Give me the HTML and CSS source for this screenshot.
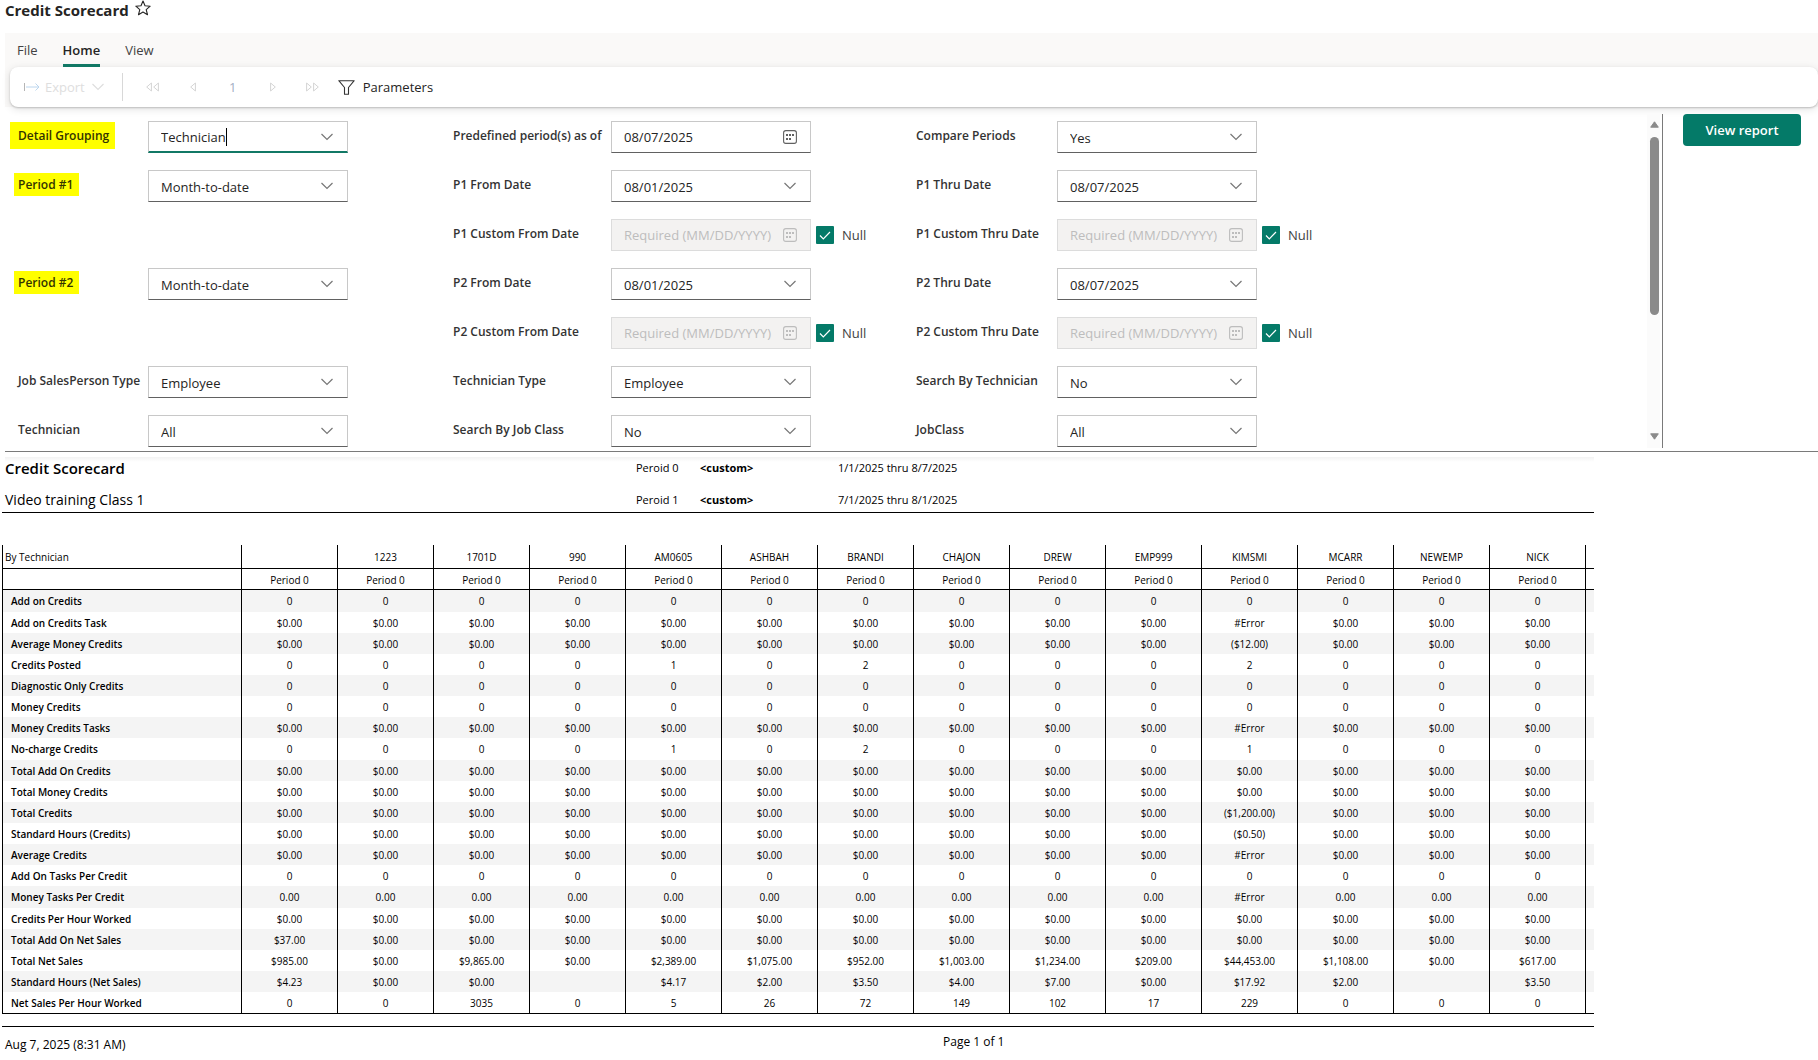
FILE: index.html
```html
<!DOCTYPE html>
<html lang="en">
<head>
    <meta charset="UTF-8">
    <meta name="viewport" content="width=device-width, initial-scale=1.0">
    <link rel="stylesheet" href="styles.css">
    <title>Credit Scorecard</title>
</head>
<body>
    <svg class="sprite" aria-hidden="true">
        <symbol id="chevron" viewBox="0 0 12 8"><path d="M.5 1 6 6.500 11.500 1" fill="none" stroke="currentColor" stroke-width="1.200"/></symbol>
        <symbol id="calendar" viewBox="0 0 14 14">
            <rect x=".6" y=".6" width="12.800" height="12.800" rx="2.200" fill="none" stroke="currentColor" stroke-width="1.100"/>
            <path d="M3 4h2v2H3zM6 4h2v2H6zM9 4h2v2H9zM3 8h2v2H3zM6 8h2v2H6z" fill="currentColor"/>
        </symbol>
        <symbol id="prev" viewBox="0 0 6 10"><path d="M5.400 1v8L.7 5z" fill="none" stroke="currentColor"/></symbol>
        <symbol id="next" viewBox="0 0 6 10"><path d="M.6 1v8l4.700-4z" fill="none" stroke="currentColor"/></symbol>
    </svg>

    <header class="titulo">
        <h1>Credit Scorecard</h1>
        <button class="star" aria-label="Favorite">
            <svg width="16" height="16" viewBox="0 0 16 16"><path d="M8 1l2 4.800 5.200.4-4 3.400 1.300 5.100L8 12l-4.500 2.700 1.300-5.100-4-3.400L6 5.800z" fill="none" stroke="#252423" stroke-width="1.100" stroke-linejoin="round"/></svg>
        </button>
    </header>

    <div class="ribbon">
        <nav class="tabs">
            <button>File</button>
            <button class="active">Home</button>
            <button>View</button>
        </nav>
        <div class="toolbar">
            <button class="export" disabled>
                <svg width="16" height="10" viewBox="0 0 16 10"><path d="M.5 1v8" stroke="#b5b5b5"/><path d="M2 5h13M11.500 1.500 15 5l-3.500 3.500" fill="none" stroke="#bcd6ee"/></svg>
                Export
                <svg class="chevron" width="12" height="8"><use href="#chevron"/></svg>
            </button>
            <div class="separator"></div>
            <button class="page" disabled aria-label="First page"><svg width="6" height="10"><use href="#prev"/></svg><svg width="6" height="10"><use href="#prev"/></svg></button>
            <button class="page" disabled aria-label="Previous page"><svg width="6" height="10"><use href="#prev"/></svg></button>
            <span class="page number">1</span>
            <button class="page" disabled aria-label="Next page"><svg width="6" height="10"><use href="#next"/></svg></button>
            <button class="page" disabled aria-label="Last page"><svg width="6" height="10"><use href="#next"/></svg><svg width="6" height="10"><use href="#next"/></svg></button>
            <button class="parameters">
                <svg width="17" height="15" viewBox="0 0 17 15"><path d="M.8.7h15.400L10.500 7.500v6.700h-4V7.500z" fill="none" stroke="#333" stroke-width="1.100" stroke-linejoin="round"/></svg>
                Parameters
            </button>
        </div>
    </div>

    <section class="panel">
        <form class="params">
            <label for="grouping"><mark class="big">Detail Grouping</mark></label>
            <div class="field focus">
                <input id="grouping" class="combo" type="text" value="Technician"><span class="caret"></span>
                <svg class="chevron" width="12" height="8"><use href="#chevron"/></svg>
            </div>
            <label for="asof">Predefined period(s) as of</label>
            <div class="field"><input id="asof" type="text" value="08/07/2025"><svg width="14" height="14"><use href="#calendar"/></svg></div>
            <label for="compare">Compare Periods</label>
            <div class="field"><select id="compare"><option>Yes</option></select><svg class="chevron" width="12" height="8"><use href="#chevron"/></svg></div>

            <label for="period1"><mark>Period #1</mark></label>
            <div class="field"><select id="period1"><option>Month-to-date</option></select><svg class="chevron" width="12" height="8"><use href="#chevron"/></svg></div>
            <label for="p1from">P1 From Date</label>
            <div class="field"><select id="p1from"><option>08/01/2025</option></select><svg class="chevron" width="12" height="8"><use href="#chevron"/></svg></div>
            <label for="p1thru">P1 Thru Date</label>
            <div class="field"><select id="p1thru"><option>08/07/2025</option></select><svg class="chevron" width="12" height="8"><use href="#chevron"/></svg></div>

            <label class="second" for="p1cfrom">P1 Custom From Date</label>
            <div class="custom">
                <div class="field off"><input id="p1cfrom" type="text" placeholder="Required (MM/DD/YYYY)" disabled><svg width="14" height="14"><use href="#calendar"/></svg></div>
                <label class="null"><input type="checkbox" checked>Null</label>
            </div>
            <label for="p1cthru">P1 Custom Thru Date</label>
            <div class="custom">
                <div class="field off"><input id="p1cthru" type="text" placeholder="Required (MM/DD/YYYY)" disabled><svg width="14" height="14"><use href="#calendar"/></svg></div>
                <label class="null"><input type="checkbox" checked>Null</label>
            </div>

            <label for="period2"><mark>Period #2</mark></label>
            <div class="field"><select id="period2"><option>Month-to-date</option></select><svg class="chevron" width="12" height="8"><use href="#chevron"/></svg></div>
            <label for="p2from">P2 From Date</label>
            <div class="field"><select id="p2from"><option>08/01/2025</option></select><svg class="chevron" width="12" height="8"><use href="#chevron"/></svg></div>
            <label for="p2thru">P2 Thru Date</label>
            <div class="field"><select id="p2thru"><option>08/07/2025</option></select><svg class="chevron" width="12" height="8"><use href="#chevron"/></svg></div>

            <label class="second" for="p2cfrom">P2 Custom From Date</label>
            <div class="custom">
                <div class="field off"><input id="p2cfrom" type="text" placeholder="Required (MM/DD/YYYY)" disabled><svg width="14" height="14"><use href="#calendar"/></svg></div>
                <label class="null"><input type="checkbox" checked>Null</label>
            </div>
            <label for="p2cthru">P2 Custom Thru Date</label>
            <div class="custom">
                <div class="field off"><input id="p2cthru" type="text" placeholder="Required (MM/DD/YYYY)" disabled><svg width="14" height="14"><use href="#calendar"/></svg></div>
                <label class="null"><input type="checkbox" checked>Null</label>
            </div>

            <label for="jobtype">Job SalesPerson Type</label>
            <div class="field"><select id="jobtype"><option>Employee</option></select><svg class="chevron" width="12" height="8"><use href="#chevron"/></svg></div>
            <label for="techtype">Technician Type</label>
            <div class="field"><select id="techtype"><option>Employee</option></select><svg class="chevron" width="12" height="8"><use href="#chevron"/></svg></div>
            <label for="bytech">Search By Technician</label>
            <div class="field"><select id="bytech"><option>No</option></select><svg class="chevron" width="12" height="8"><use href="#chevron"/></svg></div>

            <label for="tech">Technician</label>
            <div class="field"><select id="tech"><option>All</option></select><svg class="chevron" width="12" height="8"><use href="#chevron"/></svg></div>
            <label for="byjob">Search By Job Class</label>
            <div class="field"><select id="byjob"><option>No</option></select><svg class="chevron" width="12" height="8"><use href="#chevron"/></svg></div>
            <label for="jobclass">JobClass</label>
            <div class="field"><select id="jobclass"><option>All</option></select><svg class="chevron" width="12" height="8"><use href="#chevron"/></svg></div>
        </form>
        <div class="scrollbar">
            <svg width="9" height="7" viewBox="0 0 9 7"><path d="M4.500.8 8.300 6.200H.7z" fill="#8a8a8a" stroke="#8a8a8a" stroke-linejoin="round"/></svg>
            <div class="track"><div class="thumb"></div></div>
            <svg width="9" height="7" viewBox="0 0 9 7"><path d="M4.500 6.200.7.800h7.600z" fill="#8a8a8a" stroke="#8a8a8a" stroke-linejoin="round"/></svg>
        </div>
        <div class="actions">
            <button class="view-report">View report</button>
        </div>
    </section>

    <main class="report">
        <div class="report-head">
            <h2>Credit Scorecard</h2>
            <span>Peroid 0</span>
            <b>&lt;custom&gt;</b>
            <span>1/1/2025 thru 8/7/2025</span>
            <p>Video training Class 1</p>
            <span>Peroid 1</span>
            <b>&lt;custom&gt;</b>
            <span>7/1/2025 thru 8/1/2025</span>
        </div>

        <table>
            <colgroup id="cols"></colgroup>
            <thead id="head"></thead>
            <tbody id="rows"></tbody>
        </table>

        <footer>
            <span class="date">Aug 7, 2025 (8:31 AM)</span>
            <span>Page 1 of 1</span>
        </footer>
    </main>

    <script>
        const doc=document

        const techs=['','1223','1701D','990','AM0605','ASHBAH','BRANDI','CHAJON','DREW','EMP999','KIMSMI','MCARR','NEWEMP','NICK']

        // each line: label, default value, cells that differ (column: value)
        const lines=[
            ['Add on Credits', '0', {}],
            ['Add on Credits Task', '$0.00', {10:'#Error'}],
            ['Average Money Credits', '$0.00', {10:'($12.00)'}],
            ['Credits Posted', '0', {4:'1', 6:'2', 10:'2'}],
            ['Diagnostic Only Credits', '0', {}],
            ['Money Credits', '0', {}],
            ['Money Credits Tasks', '$0.00', {10:'#Error'}],
            ['No-charge Credits', '0', {4:'1', 6:'2', 10:'1'}],
            ['Total Add On Credits', '$0.00', {}],
            ['Total Money Credits', '$0.00', {}],
            ['Total Credits', '$0.00', {10:'($1,200.00)'}],
            ['Standard Hours (Credits)', '$0.00', {10:'($0.50)'}],
            ['Average Credits', '$0.00', {10:'#Error'}],
            ['Add On Tasks Per Credit', '0', {}],
            ['Money Tasks Per Credit', '0.00', {10:'#Error'}],
            ['Credits Per Hour Worked', '$0.00', {}],
            ['Total Add On Net Sales', '$0.00', {0:'$37.00'}],
            ['Total Net Sales', '$0.00', {0:'$985.00', 2:'$9,865.00', 4:'$2,389.00', 5:'$1,075.00', 6:'$952.00', 7:'$1,003.00', 8:'$1,234.00', 9:'$209.00', 10:'$44,453.00', 11:'$1,108.00', 13:'$617.00'}],
            ['Standard Hours (Net Sales)', '$0.00', {0:'$4.23', 3:'', 4:'$4.17', 5:'$2.00', 6:'$3.50', 7:'$4.00', 8:'$7.00', 10:'$17.92', 11:'$2.00', 12:'', 13:'$3.50'}],
            ['Net Sales Per Hour Worked', '0', {2:'3035', 4:'5', 5:'26', 6:'72', 7:'149', 8:'102', 9:'17', 10:'229'}]
        ]

        doc.getElementById("cols").innerHTML=`<col class="name">${techs.map(()=>'<col>').join('')}<col class="tail">`

        doc.getElementById("head").innerHTML=`
            <tr><th>By Technician</th>${techs.map(t=>`<th>${t}</th>`).join('')}<td></td></tr>
            <tr><td></td>${techs.map(()=>'<th>Period 0</th>').join('')}<td></td></tr>`

        doc.getElementById("rows").innerHTML=lines.map(([label, value, other])=>
            `<tr><th>${label}</th>${techs.map((t,i)=>`<td>${i in other ? other[i] : value}</td>`).join('')}<td></td></tr>`
        ).join('')
    </script>
</body>
</html>
```
FILE: styles.css
```css
*{
    box-sizing: border-box;
    margin: 0;
    padding: 0;
}
body{
    background: #fff;
    color: #252423;
    font-family: "Segoe UI", "Open Sans", "Noto Sans", sans-serif;
    font-size: 13px;
    line-height: 20px;
}
button, input, select{
    font: inherit;
    color: inherit;
    border: none;
    background: none;
    outline: none;
}
.sprite{
    display: none;
}
.titulo{
    display: flex;
    gap: 6px;
    height: 33px;
    padding-left: 5px;
}
.titulo h1{
    font-size: 15px;
    font-weight: 700;
    line-height: 20px;
}
.star{
    height: 18px;
}

/* ribbon */
.ribbon{
    margin-left: 5px;
    background: #faf9f8;
}
.tabs{
    display: flex;
    gap: 25px;
    height: 34px;
    padding-left: 12px;
}
.tabs button{
    padding-top: 2px;
    border-bottom: 3px solid transparent;
    color: #424242;
}
.tabs .active{
    border-color: #117865;
    color: #242424;
    font-weight: 600;
}
.toolbar{
    display: flex;
    align-items: center;
    height: 40px;
    margin-left: 5px;
    padding-left: 14px;
    border-radius: 8px;
    background: #fff;
    box-shadow: 0 1px 2px rgba(0,0,0,0.2), 0 2px 8px rgba(0,0,0,0.12);
}
.toolbar button, .page{
    display: flex;
    align-items: center;
    justify-content: center;
}
.export{
    gap: 5px;
    color: #dedede;
}
.export .chevron{
    margin-left: 2px;
}
.separator{
    width: 1px;
    height: 28px;
    margin: 0 10px 0 18px;
    background: #d8d8d8;
}
.page{
    width: 40px;
    gap: 1px;
    color: #d4d4d4;
}
.number{
    color: #a3aec4;
}
.parameters{
    gap: 8px;
    margin-left: 5px;
}

/* parameters */
.panel{
    display: flex;
    margin-left: 5px;
    padding: 7px 0 3px;
    border-bottom: 1px solid #7a7a7a;
}
.params{
    flex: 1;
    display: grid;
    grid-template-columns: 130px 305px 158px 305px 141px 1fr;
    grid-auto-rows: 32px;
    row-gap: 17px;
    padding: 7px 0 1px 13px;
}
.params > label{
    padding-top: 5px;
    color: #333;
    font-size: 12px;
    font-weight: 600;
    white-space: nowrap;
}
.second{
    grid-column: 3;
}
mark{
    margin-left: -4px;
    padding: 3px 6px 3px 4px;
    background: #ff0;
    color: #333300;
}
mark.big{
    margin-left: -8px;
    padding: 5px 6px 5px 8px;
}
.field{
    display: flex;
    align-items: center;
    width: 200px;
    height: 32px;
    padding-right: 13px;
    border: 1px solid #c8c8c8;
    border-bottom-color: #616161;
}
.field svg{
    flex: none;
    color: #616161;
}
.field .chevron{
    margin: 0 1px 0 auto;
    color: #777;
}
.field input{
    flex: 1;
    min-width: 0;
    height: 30px;
    margin: 0 7px 0 12px;
}
.field select{
    flex: 1;
    height: 30px;
    margin-right: -12px;
    padding: 2px 12px 0;
    appearance: none;
}
.field .combo{
    flex: none;
    field-sizing: content;
    margin-right: 0;
}
.caret{
    width: 1px;
    height: 18px;
    background: #000;
}
.focus{
    border-bottom: 2px solid #117865;
}
.off{
    border-color: #dcdcdc;
    background: #f3f2f1;
}
.off input::placeholder{
    color: #bdbdbd;
}
.off svg{
    color: #bdbdbd;
}
.custom{
    display: flex;
    gap: 5px;
}
.null{
    display: flex;
    align-items: center;
    gap: 8px;
    color: #424242;
}
.null input{
    width: 18px;
    height: 18px;
    border-radius: 1px;
    background: #047a68 url("data:image/svg+xml,%3Csvg xmlns='http://www.w3.org/2000/svg' viewBox='0 0 18 18'%3E%3Cpath d='M4 9.500l3.300 3.300L14 6' fill='none' stroke='white' stroke-width='1.200'/%3E%3C/svg%3E");
    appearance: none;
}
.scrollbar{
    display: flex;
    flex-direction: column;
    align-items: center;
    gap: 9px;
    width: 16px;
    padding: 7px 0 8px;
    border-right: 1px solid #7a7a7a;
    background: linear-gradient(#fbfbfb, #fbfbfb) 0 0 / 13px 100% no-repeat;
}
.track{
    flex: 1;
    width: 9px;
}
.thumb{
    height: 62%;
    border-radius: 5px;
    background: #8a8a8a;
}
.actions{
    width: 155px;
    padding-left: 20px;
}
.view-report{
    width: 118px;
    height: 32px;
    border-radius: 4px;
    background: #047a68;
    color: #fff;
    font-weight: 600;
}

/* report */
.report{
    margin: 5px 224px 0 2px;
    color: #000;
    font-size: 11px;
}
.report-head{
    display: grid;
    grid-template-columns: 631px 64px 138px 1fr;
    grid-auto-rows: 22px;
    row-gap: 10px;
    align-items: center;
    padding: 0 0 1px 3px;
    border-bottom: 1px solid #000;
    background: linear-gradient(#f3f3f3, #fff) 3px 0 / 100% 5px no-repeat;
}
.report-head h2{
    font-size: 15px;
    font-weight: 600;
}
.report-head p{
    font-size: 14px;
}
table{
    width: 100%;
    margin: 32px 0 12px;
    border-spacing: 0;
    border-bottom: 1px solid #000;
    table-layout: fixed;
    font-size: 10px;
    line-height: 16px;
}
.name{
    width: 239px;
}
.tail{
    width: 9px;
}
th, td{
    height: 21px;
    border-left: 1px solid #000;
    text-align: center;
    font-weight: 400;
    white-space: nowrap;
}
thead th, thead td{
    border-bottom: 1px solid #000;
}
thead tr:first-child th{
    height: 24px;
}
thead th:first-child{
    padding-left: 2px;
    text-align: left;
}
thead tr:last-child th{
    padding-top: 2px;
}
tbody th{
    padding-left: 8px;
    text-align: left;
    font-weight: 600;
}
tbody tr:nth-child(odd){
    background: #f4f4f4;
}
tbody tr:nth-child(7n+1) td{
    height: 22px;
}
footer{
    display: grid;
    grid-template-columns: 938px 1fr;
    padding: 5px 0 0 3px;
    border-top: 1px solid #000;
    font-size: 12px;
}
.date{
    padding-top: 3px;
}
```
